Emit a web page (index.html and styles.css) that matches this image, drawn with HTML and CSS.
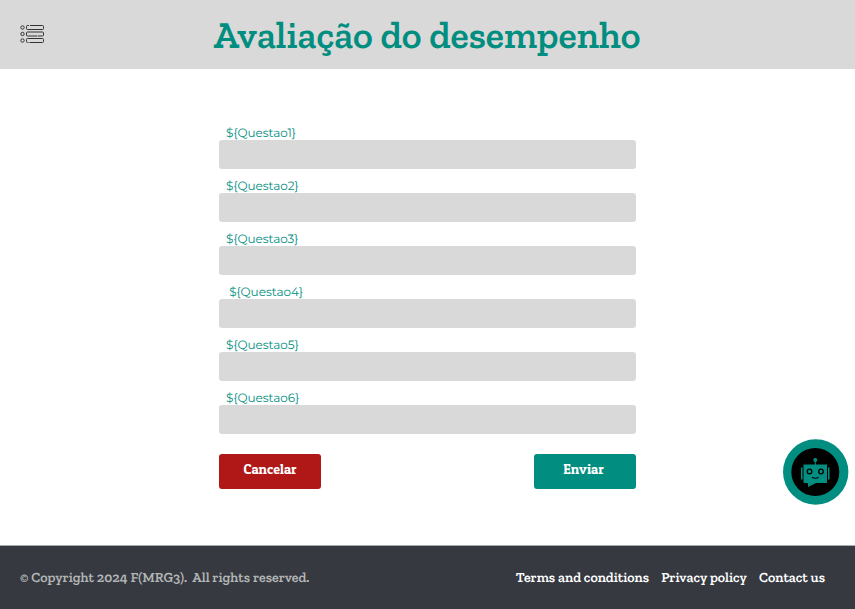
FILE: index.html
```
<!DOCTYPE html>
<html lang="pt">
<head>
<meta charset="utf-8">
<meta name="viewport" content="width=device-width, initial-scale=1">
<title>Avaliação do desempenho</title>
<link rel="stylesheet" href="styles.css">
</head>
<body>
<header class="topbar">
  <button class="menu" type="button" aria-label="Menu">
    <svg viewBox="0 0 26 20" width="26" height="20" fill="none" stroke="#333" stroke-width="1">
      <circle cx="3.500" cy="2.500" r="1.700"/><rect x="7.500" y="0.500" width="17" height="4" rx="1"/>
      <circle cx="3.500" cy="9" r="1.700"/><rect x="7.500" y="7" width="17" height="4" rx="1"/>
      <circle cx="3.500" cy="15.500" r="1.700"/><rect x="7.500" y="13.500" width="17" height="4" rx="1"/>
      <path stroke="#d9d9d9" d="M10 0.500h1M18 11h1M9.500 17.500h1"/>
    </svg>
  </button>
  <h1 class="title">Avaliação do desempenho</h1>
</header>
<main class="content">
  <form class="form">
    <div class="field"><label for="q1">${Questao1}</label><input id="q1" type="text"></div>
    <div class="field"><label for="q2">${Questao2}</label><input id="q2" type="text"></div>
    <div class="field"><label for="q3">${Questao3}</label><input id="q3" type="text"></div>
    <div class="field"><label for="q4">&nbsp;${Questao4}</label><input id="q4" type="text"></div>
    <div class="field"><label for="q5">${Questao5}</label><input id="q5" type="text"></div>
    <div class="field"><label for="q6">${Questao6}</label><input id="q6" type="text"></div>
    <div class="actions">
      <button class="btn btn-cancel" type="button">Cancelar</button>
      <button class="btn btn-send" type="submit">Enviar&nbsp;</button>
    </div>
  </form>
</main>
<footer class="footer">
  <p class="copyright">© Copyright 2024 F(MRG3).&nbsp; All rights reserved.</p>
  <nav class="links">
    <a href="#">Terms and conditions</a>
    <a href="#">Privacy policy</a>
    <a href="#">Contact us</a>
  </nav>
</footer>
<button class="chatbot" type="button" aria-label="Chatbot">
  <svg viewBox="0 0 66 66" width="66" height="66">
    <circle cx="32.700" cy="33" r="32.700" fill="#018e80"/>
    <circle cx="32.300" cy="33" r="24" fill="#000"/>
    <g fill="#018e80">
      <circle cx="32.300" cy="21" r="2"/>
      <path d="M31.800 22h1v5h-1zM20.500 25.500h23.500v18.500h-11l-8 4v-4h-4.500zM18 28.500h1.500v12H18zM45 28.500h1.500v12H45z"/>
    </g>
    <g fill="none" stroke="#000">
      <circle cx="26.500" cy="32.500" r="2.300" stroke-width="1.300"/>
      <circle cx="38" cy="32.500" r="2.300" stroke-width="1.300"/>
      <path d="M29 38.300q3.300 2 6.600 0" stroke-width="1.100"/>
    </g>
  </svg>
</button>
</body>
</html>
```
FILE: styles.css
```
* {
  box-sizing: border-box;
}

body {
  display: flex;
  flex-direction: column;
  min-height: 100vh;
  margin: 0;
  background: #fff;
  font-family: "Zilla Slab", "DejaVu Serif Condensed", "DejaVu Serif", serif;
  text-rendering: geometricPrecision;
}

button {
  border: 0;
  cursor: pointer;
  font-family: inherit;
}

.topbar {
  display: grid;
  grid-template-columns: 26px 1fr 26px;
  align-items: center;
  min-height: 69px;
  padding: 0 20px 0 19px;
  background: #d9d9d9;
}

.menu {
  display: flex;
  padding: 0;
  background: none;
}

.title {
  margin: 0;
  color: #018e80;
  font-size: 38px;
  font-weight: 600;
  line-height: 40px;
  text-align: center;
}

.content {
  flex: 1;
  padding: 48px 16px;
}

.form {
  max-width: 417px;
  margin: 0 auto;
}

.field {
  padding-top: 8px;
}

.field label {
  display: block;
  height: 15px;
  padding-left: 7px;
  color: #018e80;
  font: 12px/18px Montserrat, Inter, sans-serif;
}

.field input {
  display: block;
  width: 100%;
  height: 29px;
  margin-bottom: 1px;
  padding: 0 8px;
  border: 0;
  border-radius: 3px;
  background: #d9d9d9;
}

.actions {
  display: flex;
  justify-content: space-between;
  margin-top: 20px;
}

.btn {
  width: 102px;
  height: 35px;
  padding: 0 0 6px;
  border-radius: 3px;
  color: #fff;
  font-family: "Patua One", Bitter, "Zilla Slab", "DejaVu Serif", serif;
  font-size: 14px;
  font-weight: 400;
}

.btn-cancel {
  background: #b01717;
}

.btn-send {
  background: #018e80;
}

.footer {
  display: flex;
  align-items: center;
  justify-content: space-between;
  min-height: 64px;
  padding: 1px 30px 0 20px;
  border-top: 1px solid #a5adad;
  background: #363940;
  font-size: 14px;
  font-weight: 600;
  line-height: 16px;
}

.copyright {
  margin: 0;
  color: #b3b6b6;
}

.links {
  display: flex;
  gap: 12px;
}

.links a {
  color: #fff;
  text-decoration: none;
}

.chatbot {
  position: fixed;
  right: 6px;
  bottom: 104px;
  display: flex;
  padding: 0;
  border-radius: 50%;
  background: none;
}
```
